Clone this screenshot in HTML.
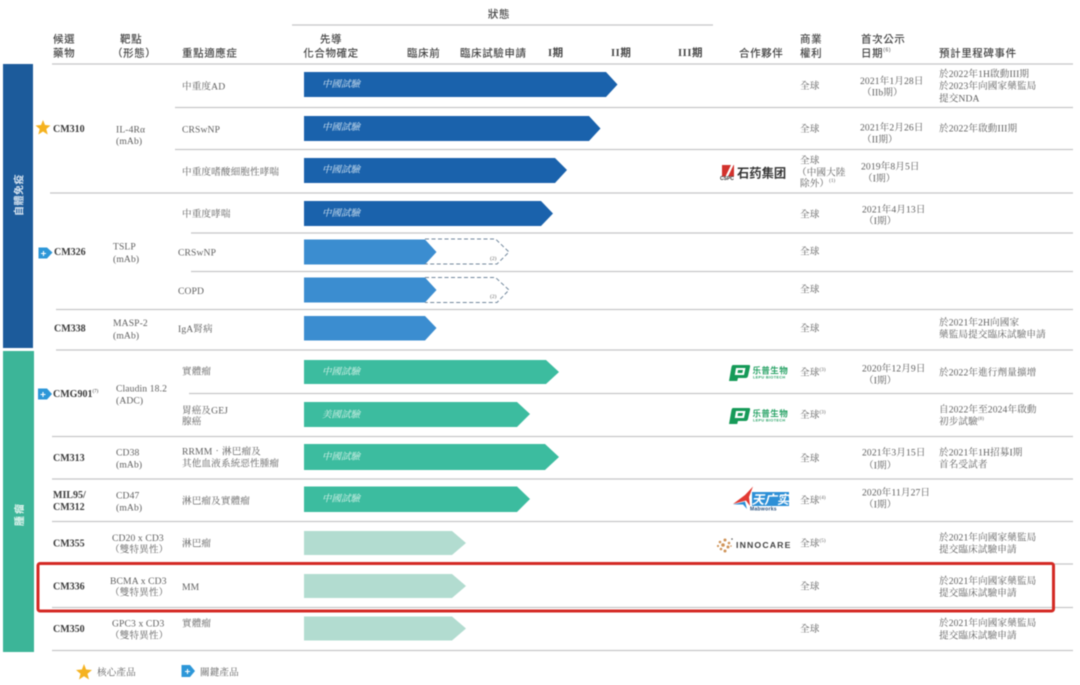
<!DOCTYPE html>
<html lang="zh-Hant"><head><meta charset="utf-8"><title>Pipeline</title>
<style>
html,body{margin:0;padding:0;background:#fff;width:1080px;height:685px;overflow:hidden}
svg{display:block;filter:blur(.45px)}
text{dominant-baseline:central}
.h{font:500 10.5px "Liberation Sans","Noto Sans CJK TC",sans-serif;fill:#444;letter-spacing:.6px}
.r{font:700 10.5px "Liberation Serif","Noto Sans CJK TC",serif;fill:#444}
.b{font:9.6px "Liberation Serif","Noto Serif CJK TC",serif;fill:#5f5f5f;letter-spacing:.12px}
.d{font:700 10px "Liberation Serif",serif;fill:#3a3a3a}
.i{font:italic 9.5px "Liberation Serif","Noto Serif CJK TC",serif;fill:#d5e6f3}
.g{fill:#d9f3ea}
.s{font-size:5px}
.l line{stroke:#c6c6c8;stroke-width:1.2}
</style></head><body>
<svg width="1080" height="685" viewBox="0 0 1080 685" xmlns="http://www.w3.org/2000/svg">
<g class="l">
<line x1="292" y1="25" x2="713" y2="25"/>
<line x1="52" y1="64" x2="1073" y2="64"/>
<line x1="175" y1="107.500" x2="1073" y2="107.500"/>
<line x1="175" y1="149.500" x2="1073" y2="149.500"/>
<line x1="50" y1="193" x2="1073" y2="193"/>
<line x1="191" y1="233" x2="1073" y2="233"/>
<line x1="191" y1="271.500" x2="1073" y2="271.500"/>
<line x1="56" y1="309.500" x2="1073" y2="309.500"/>
<line x1="56" y1="350" x2="1073" y2="350"/>
<line x1="189" y1="393.500" x2="1073" y2="393.500"/>
<line x1="52" y1="436.500" x2="1073" y2="436.500"/>
<line x1="52" y1="479" x2="1073" y2="479"/>
<line x1="52" y1="521.500" x2="1073" y2="521.500"/>
<line x1="1053" y1="564" x2="1073" y2="564"/>
<line x1="52" y1="607.500" x2="1073" y2="607.500"/>
<line x1="52" y1="650.500" x2="1073" y2="650.500"/>
</g>
<rect x="3" y="64" width="30" height="284" fill="#1c5b9b"/>
<rect x="3" y="351" width="31" height="301" fill="#3cb598"/>
<text transform="translate(18 195) rotate(-90)" text-anchor="middle" style="font:700 10px 'Noto Sans CJK TC',sans-serif;fill:#d7e4f0;letter-spacing:.5px">自體免疫</text>
<text transform="translate(18.500 514) rotate(-90)" text-anchor="middle" style="font:700 10px 'Noto Sans CJK TC',sans-serif;fill:#e2f5ef;letter-spacing:2px">腫瘤</text>

<g fill="#1a62ac">
<polygon points="304,72 606,72 617.500,84.500 606,97 304,97"/>
<polygon points="304,116 589,116 600.500,128.500 589,141 304,141"/>
<polygon points="304,158 555,158 567,170 555,183 304,183"/>
<polygon points="304,201 541,201 553,213.500 541,226 304,226"/>
</g>
<g fill="#3b8dd0">
<polygon points="304,239.500 425,239.500 436.500,252 425,264.500 304,264.500"/>
<polygon points="304,277.500 425,277.500 436.500,290 425,302.500 304,302.500"/>
<polygon points="304,316 425,316 436.500,328 425,340.500 304,340.500"/>
</g>
<g fill="none" stroke="#71879c" stroke-width="1" stroke-dasharray="4 2.500">
<path d="M425 239H495.500L509 252 497 264H425"/>
<path d="M425 277.500H495.500L509 290 497 302.500H425"/>
</g>
<g fill="#3cbc9f">
<polygon points="304,360 546,360 559,372 546,384 304,384"/>
<polygon points="304,402 517,402 530,414 517,427 304,427"/>
<polygon points="304,444 545,444 559,457 545,470 304,470"/>
<polygon points="304,486.500 517,486.500 530,499 517,512 304,512"/>
</g>
<g fill="#b2dcd0">
<polygon points="304,531 452,531 466,543 452,555 304,555"/>
<polygon points="304,574 452,574 466,586 452,598 304,598"/>
<polygon points="304,616.500 452,616.500 466,628.500 452,640.500 304,640.500"/>
</g>
<g class="i" transform="translate(0 1)">
<text x="322" y="84">中國試驗</text><text x="322" y="127">中國試驗</text><text x="322" y="169.500">中國試驗</text><text x="322" y="213">中國試驗</text>
<text x="322" y="371.500" class="g">中國試驗</text><text x="322" y="414.500" class="g">美國試驗</text><text x="322" y="456.500" class="g">中國試驗</text><text x="322" y="498.500" class="g">中國試驗</text>
</g>
<g style="font:5.500px 'Liberation Serif',serif;fill:#666"><text x="490" y="259">(2)</text><text x="490" y="297">(2)</text></g>

<!-- header -->
<g class="h" transform="translate(0 .5)">
<text x="499" y="14" text-anchor="middle">狀態</text>
<text x="53" y="39">候選</text><text x="53" y="53">藥物</text>
<text x="120" y="39">靶點</text><text x="112" y="53">（形態）</text>
<text x="182" y="53">重點適應症</text>
<text x="331" y="39" text-anchor="middle">先導</text><text x="331" y="53" text-anchor="middle">化合物確定</text>
<text x="407" y="53">臨床前</text><text x="460" y="53">臨床試驗申請</text>
<text x="548" y="53" class="r">I期</text><text x="611" y="53" class="r">II期</text><text x="678" y="53" class="r">III期</text>
<text x="739" y="53">合作夥伴</text>
<text x="800" y="39">商業</text><text x="800" y="53">權利</text>
<text x="861" y="39">首次公示</text><text x="861" y="53">日期<tspan class="s" dy="-3">(6)</tspan></text>
<text x="939" y="53">預計里程碑事件</text>
</g>

<!-- drugs -->
<g class="d" transform="translate(0 .5)">
<text x="53" y="129">CM310</text><text x="54" y="252">CM326</text><text x="54" y="328.500">CM338</text>
<text x="53" y="394">CMG901<tspan class="s" dy="-3" font-weight="400">(7)</tspan></text>
<text x="53" y="458">CM313</text><text x="53" y="495">MIL95/</text><text x="53" y="507">CM312</text>
<text x="53" y="543.500">CM355</text><text x="53" y="586.500">CM336</text><text x="53" y="629">CM350</text>
</g>

<g class="b" transform="translate(0 1)">
<!-- targets -->
<text x="116" y="129">IL-4Rα</text><text x="116" y="140.500">(mAb)</text>
<text x="113" y="246">TSLP</text><text x="113" y="258.500">(mAb)</text>
<text x="113" y="322.500">MASP-2</text><text x="113" y="335">(mAb)</text>
<text x="116" y="388">Claudin 18.2</text><text x="116" y="400">(ADC)</text>
<text x="116" y="452">CD38</text><text x="116" y="464">(mAb)</text>
<text x="116" y="495">CD47</text><text x="116" y="507">(mAb)</text>
<text x="112" y="537.500">CD20 x CD3</text><text x="110" y="549">（雙特異性）</text>
<text x="110" y="580.500">BCMA x CD3</text><text x="110" y="592">（雙特異性）</text>
<text x="112" y="623">GPC3 x CD3</text><text x="110" y="635">（雙特異性）</text>
<!-- indications -->
<text x="182" y="86">中重度AD</text><text x="182" y="129">CRSwNP</text><text x="182" y="171.500">中重度嗜酸細胞性哮喘</text><text x="182" y="213.500">中重度哮喘</text>
<text x="178" y="252">CRSwNP</text><text x="178" y="290.500">COPD</text><text x="178" y="328.500">IgA腎病</text>
<text x="182" y="371">實體瘤</text><text x="182" y="410">胃癌及GEJ</text><text x="182" y="421">腺癌</text>
<text x="182" y="451">RRMM．淋巴瘤及</text><text x="182" y="463">其他血液系統惡性腫瘤</text>
<text x="182" y="500.500">淋巴瘤及實體瘤</text><text x="182" y="543">淋巴瘤</text><text x="182" y="586.500">MM</text><text x="182" y="623">實體瘤</text>
<!-- rights -->
<text x="800" y="85.500">全球</text><text x="800" y="128.500">全球</text><text x="800" y="160">全球</text><text x="797" y="172">（中國大陸</text><text x="800" y="183">除外）<tspan class="s" dy="-3">(1)</tspan></text>
<text x="800" y="214">全球</text><text x="800" y="251">全球</text><text x="800" y="289">全球</text><text x="800" y="328">全球</text>
<text x="800" y="372">全球<tspan class="s" dy="-3">(3)</tspan></text><text x="800" y="414.500">全球<tspan class="s" dy="-3">(3)</tspan></text>
<text x="800" y="458">全球</text><text x="800" y="500">全球<tspan class="s" dy="-3">(4)</tspan></text><text x="800" y="543">全球<tspan class="s" dy="-3">(5)</tspan></text>
<text x="800" y="586">全球</text><text x="800" y="628.500">全球</text>
<!-- dates -->
<text x="860" y="80.500">2021年1月28日</text><text x="862" y="92">（IIb期）</text>
<text x="860" y="127">2021年2月26日</text><text x="862" y="139">（II期）</text>
<text x="861" y="166">2019年8月5日</text><text x="863" y="178">（I期）</text>
<text x="862" y="209">2021年4月13日</text><text x="864" y="220.500">（I期）</text>
<text x="862" y="368">2020年12月9日</text><text x="864" y="380">（I期）</text>
<text x="862" y="452">2021年3月15日</text><text x="864" y="465">（I期）</text>
<text x="862" y="492">2020年11月27日</text><text x="864" y="504">（I期）</text>
<!-- milestones -->
<text x="939" y="73.500">於2022年1H啟動III期</text><text x="939" y="85.500">於2023年向國家藥監局</text><text x="939" y="98">提交NDA</text>
<text x="939" y="128">於2022年啟動III期</text>
<text x="939" y="322">於2021年2H向國家</text><text x="939" y="334">藥監局提交臨床試驗申請</text>
<text x="939" y="372">於2022年進行劑量擴增</text>
<text x="939" y="409">自2022年至2024年啟動</text><text x="939" y="421">初步試驗<tspan class="s" dy="-3">(8)</tspan></text>
<text x="939" y="452">於2021年1H招募I期</text><text x="939" y="464">首名受試者</text>
<text x="939" y="537">於2021年向國家藥監局</text><text x="939" y="549">提交臨床試驗申請</text>
<text x="939" y="580.500">於2021年向國家藥監局</text><text x="939" y="592.500">提交臨床試驗申請</text>
<text x="939" y="622.500">於2021年向國家藥監局</text><text x="939" y="635">提交臨床試驗申請</text>
<!-- legend -->
<text x="97" y="672">核心產品</text><text x="200" y="672">關鍵產品</text>
</g>

<!-- stars -->
<polygon fill="#f5b21f" points="43,120 45,125 50.500,125.500 46.300,129 47.700,134.500 43,131.500 38.300,134.500 39.700,129 35.500,125.500 41,125"/>
<polygon fill="#f5b21f" points="84,664 86.100,669.500 92,670 87.500,673.700 89,679.500 84,676.300 79,679.500 80.500,673.700 76,670 81.900,669.500"/>
<!-- tags -->
<g fill="#2d97d8">
<path d="M38.500 247.500H47L52.500 252.500 47 258.500H38.500Z"/>
<path d="M38 388.500H47L52 394 47 399.500H38Z"/>
<path d="M181.500 665H190L195 671 190 677H181.500Z"/>
</g>
<g stroke="#fff" stroke-width="1.100" fill="none">
<path d="M41 253.500H46M43.500 251V256"/><path d="M40.500 394.500H45.500M43 392V397"/><path d="M185 671.500H190M187.500 669V674"/>
</g>

<!-- CSPC -->
<rect x="722" y="165" width="12" height="11.500" fill="#d2322d"/>
<path d="M725.500 176.500L731 165H733.500L728 176.500Z" fill="#fff"/>
<text x="720" y="179" style="font:700 5px 'Liberation Sans',sans-serif;fill:#333">CSPC</text>
<text x="737" y="172.500" style="font:700 12.300px 'Noto Sans CJK SC',sans-serif;fill:#333">石药集团</text>
<!-- Lepu -->
<g>
<path d="M733 365H749Q750.500 365 750 367L748 376Q747.500 378 745.500 378H738L737.200 381H729L731.500 367Q732 365 733 365Z" fill="#169a58"/>
<path d="M736 368H745.500L744 375H734.800Z" fill="#fff"/><path d="M738 370H743L742.300 373H737.500Z" fill="#169a58"/>
<text x="752.500" y="370.500" style="font:700 8.500px 'Noto Sans CJK SC',sans-serif;fill:#2aa367;letter-spacing:.4px">乐普生物</text>
<text x="753" y="377.500" style="font:700 3.800px 'Liberation Sans',sans-serif;fill:#2aa367;letter-spacing:.35px">LEPU BIOTECH</text>
</g>
<g transform="translate(0 43)">
<path d="M733 365H749Q750.500 365 750 367L748 376Q747.500 378 745.500 378H738L737.200 381H729L731.500 367Q732 365 733 365Z" fill="#169a58"/>
<path d="M736 368H745.500L744 375H734.800Z" fill="#fff"/><path d="M738 370H743L742.300 373H737.500Z" fill="#169a58"/>
<text x="752.500" y="370.500" style="font:700 8.500px 'Noto Sans CJK SC',sans-serif;fill:#2aa367;letter-spacing:.4px">乐普生物</text>
<text x="753" y="377.500" style="font:700 3.800px 'Liberation Sans',sans-serif;fill:#2aa367;letter-spacing:.35px">LEPU BIOTECH</text>
</g>
<!-- Mabwell -->
<rect x="752" y="492" width="37" height="14" fill="#2c8fd6"/>
<text x="770.500" y="498.500" text-anchor="middle" style="font:italic 700 12.500px 'Noto Sans CJK SC',sans-serif;fill:#fff">天广实</text>
<path d="M753 486.500L745 495 733 504 746 500.500 750 506 749 497Z" fill="#e23a33"/>
<path d="M733 504.500L745 501.500 747 509 743 504.500Z" fill="#2c8fd6"/>
<text x="750" y="509.500" style="font:700 5px 'Liberation Sans',sans-serif;fill:#274e7a;letter-spacing:.3px">Mabworks</text>
<!-- Innocare -->
<g fill="#cf9358">
<circle cx="725" cy="540" r="1.500"/><circle cx="720" cy="542" r="1.300"/><circle cx="729" cy="543" r="1.300"/><circle cx="723" cy="545" r="1.800"/><circle cx="718" cy="546" r="1.100"/><circle cx="728" cy="547" r="1.500"/><circle cx="721" cy="549" r="1.300"/><circle cx="725" cy="551" r="1.500"/><circle cx="732" cy="539" r=".8" fill="#555"/><circle cx="731" cy="546" r=".8"/>
</g>
<text x="736" y="545" style="font:700 8.700px 'Liberation Sans',sans-serif;fill:#444;letter-spacing:1.15px">INNOCARE</text>

<!-- red highlight -->
<rect x="38" y="563.500" width="1015.500" height="47.500" rx="2" fill="none" stroke="#d42a24" stroke-width="3"/>
</svg>
</body></html>
